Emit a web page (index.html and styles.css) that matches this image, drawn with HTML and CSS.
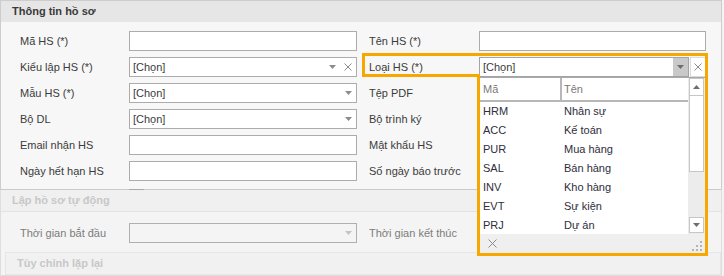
FILE: index.html
```html
<!doctype html>
<html lang="vi">
<head>
<meta charset="utf-8">
<meta name="viewport" content="width=device-width, initial-scale=1">
<title>Thông tin hồ sơ</title>
<link rel="stylesheet" href="styles.css">
</head>
<body>

	<div class="panel">

		<div class="panel-head">Thông tin hồ sơ</div>

		<div class="form">

			<label>Mã HS (*)</label>
			<div class="edit"></div>
			<label class="right">Tên HS (*)</label>
			<div class="edit"></div>

			<label>Kiểu lập HS (*)</label>
			<div class="edit combo">
				<span class="value">[Chọn]</span>
				<i class="ico"><svg width="7" height="4"><path d="M0 0H7L3.5 4Z" fill="#8c8c8c"/></svg></i>
				<i class="ico"><svg width="8" height="8"><path d="M0.5 0.5L7.5 7.5M7.5 0.5L0.5 7.5" stroke="#8c8c8c"/></svg></i>
			</div>
			<label class="right">Loại HS (*)</label>
			<div class="lookup">
				<div class="edit combo focused">
					<span class="value">[Chọn]</span>
					<i class="drop-btn"><svg width="7" height="4"><path d="M0 0H7L3.5 4Z" fill="#6e6e6e"/></svg></i>
				</div>
				<div class="clear-btn"><svg width="8" height="8"><path d="M0.5 0.5L7.5 7.5M7.5 0.5L0.5 7.5" stroke="#8c8c8c"/></svg></div>

				<div class="popup">
					<div class="popup-body">
						<div class="grid">
							<div class="grid-head"><span class="c1">Mã</span><span class="c2">Tên</span></div>
							<div class="grid-row"><span class="c1">HRM</span><span class="c2">Nhân sự</span></div>
							<div class="grid-row"><span class="c1">ACC</span><span class="c2">Kế toán</span></div>
							<div class="grid-row"><span class="c1">PUR</span><span class="c2">Mua hàng</span></div>
							<div class="grid-row"><span class="c1">SAL</span><span class="c2">Bán hàng</span></div>
							<div class="grid-row"><span class="c1">INV</span><span class="c2">Kho hàng</span></div>
							<div class="grid-row"><span class="c1">EVT</span><span class="c2">Sự kiện</span></div>
							<div class="grid-row"><span class="c1">PRJ</span><span class="c2">Dự án</span></div>
						</div>
						<div class="vscroll">
							<div class="sb-btn up"><svg width="7" height="4"><path d="M0 4H7L3.5 0Z" fill="#6e6e6e"/></svg></div>
							<div class="sb-thumb"></div>
							<div class="sb-track"></div>
							<div class="sb-btn down"><svg width="7" height="4"><path d="M0 0H7L3.5 4Z" fill="#6e6e6e"/></svg></div>
						</div>
					</div>
					<div class="popup-foot">
						<svg class="foot-close" width="9" height="9"><path d="M0.5 0.5L8.5 8.5M8.5 0.5L0.5 8.5" stroke="#8a8a8a"/></svg>
						<svg class="grip" width="12" height="10">
							<rect x="9" y="0" width="2" height="2" fill="#b4b4b4"/>
							<rect x="5" y="4" width="2" height="2" fill="#b4b4b4"/>
							<rect x="9" y="4" width="2" height="2" fill="#b4b4b4"/>
							<rect x="1" y="8" width="2" height="2" fill="#b4b4b4"/>
							<rect x="5" y="8" width="2" height="2" fill="#b4b4b4"/>
							<rect x="9" y="8" width="2" height="2" fill="#b4b4b4"/>
						</svg>
					</div>
				</div>
			</div>

			<label>Mẫu HS (*)</label>
			<div class="edit combo">
				<span class="value">[Chọn]</span>
				<i class="ico"><svg width="7" height="4"><path d="M0 0H7L3.5 4Z" fill="#8c8c8c"/></svg></i>
			</div>
			<label class="right">Tệp PDF</label>
			<div></div>

			<label>Bộ DL</label>
			<div class="edit combo">
				<span class="value">[Chọn]</span>
				<i class="ico"><svg width="7" height="4"><path d="M0 0H7L3.5 4Z" fill="#8c8c8c"/></svg></i>
			</div>
			<label class="right">Bộ trình ký</label>
			<div></div>

			<label>Email nhận HS</label>
			<div class="edit"></div>
			<label class="right">Mật khẩu HS</label>
			<div></div>

			<label>Ngày hết hạn HS</label>
			<div class="edit"></div>
			<label class="right">Số ngày báo trước</label>
			<div></div>

		</div>

	</div>

	<div class="panel sub">

		<i class="stub"></i>

		<div class="panel-head">Lập hồ sơ tự động</div>

		<div class="form single">
			<label>Thời gian bắt đầu</label>
			<div class="edit combo disabled">
				<span class="value"></span>
				<i class="ico"><svg width="7" height="4"><path d="M0 0H7L3.5 4Z" fill="#c4c4c4"/></svg></i>
			</div>
			<label class="right">Thời gian kết thúc</label>
			<div></div>
		</div>

		<div class="group">
			<div class="group-head">Tùy chỉnh lặp lại</div>
		</div>

	</div>

	<svg class="focus-ring" width="724" height="276">
		<path d="M363.5 54.5H706.5V254.5H478.5V75.5H363.5Z" fill="none" stroke="#f7a800" stroke-width="3"/>
	</svg>

</body>
</html>
```

FILE: styles.css
```css
	body { background: #f3f3f3; color: #3b3b3b; font: 11px "Liberation Sans", Arial, sans-serif; height: 276px; margin: 0; overflow: hidden; position: relative; }

	.panel { background: #f7f7f7; border: 1px solid #cdcdcd; border-bottom-color: #cacaca; width: 722px; box-sizing: border-box; }
	.panel-head { background: #e6e6e6; color: #3a3a3a; font-weight: bold; height: 21px; line-height: 21px; padding-left: 11px; }

	.form { display: grid; grid-template-columns: 109px 228px 122px 227px; grid-auto-rows: 20px; row-gap: 6px; padding: 9px 0 8px 19px; }
	.form label { align-self: center; white-space: nowrap; }
	.form label.right { padding-left: 12px; }

	.edit { background: #fff; border: 1px solid #acacac; box-sizing: border-box; height: 20px; }
	.combo { align-items: center; display: flex; padding-left: 3px; }
	.combo .value { flex: 1; }
	.ico { align-items: center; display: flex; height: 18px; justify-content: center; width: 16px; }

	.lookup { display: flex; position: relative; }
	.lookup .focused { border-color: #a4a4a4; padding-right: 0; width: 210px; }
	.drop-btn { align-items: center; background: #c9c9c9; display: flex; height: 18px; justify-content: center; width: 15px; }
	.clear-btn { align-items: center; background: #fff; border: 1px solid #dadada; box-sizing: border-box; display: flex; height: 20px; justify-content: center; margin-left: 1px; width: 16px; }

	.popup { background: #fff; border-left: 1px solid #a8a8a8; border-top: 1px solid #a8a8a8; box-sizing: border-box; display: flex; flex-direction: column; height: 176px; left: 0; position: absolute; top: 20px; width: 226px; z-index: 2; }
	.popup-body { display: flex; height: 156px; }
	.grid { flex: 1; overflow: hidden; }
	.grid-head { border-bottom: 2px solid #b7b7b7; color: #7a7a7a; display: flex; height: 22px; line-height: 22px; }
	.grid-head .c1 { border-right: 2px solid #b7b7b7; }
	.grid-row { color: #2e2e3a; display: flex; height: 19px; line-height: 19px; }
	.c1 { box-sizing: border-box; padding-left: 3px; width: 82px; }
	.c2 { padding-left: 2px; }

	.vscroll { background: #ececec; box-sizing: border-box; display: flex; flex-direction: column; padding: 0 1px 1px; width: 17px; }
	.sb-btn { align-items: center; background: #fff; border: 1px solid #c6c6c6; box-sizing: border-box; display: flex; justify-content: center; }
	.sb-btn.up { height: 18px; }
	.sb-btn.down { height: 16px; }
	.sb-thumb { background: #fff; border: 1px solid #c6c6c6; border-top: none; box-sizing: border-box; height: 76px; }
	.sb-track { flex: 1; }

	.popup-foot { align-items: center; background: #efefef; display: flex; flex: 1; justify-content: space-between; padding: 0 2px 0 8px; }
	.grip { margin-top: 4px; }

	.sub { background: #f4f4f4; border-color: #dedede; border-top: none; position: relative; }
	.sub .panel-head { background: #f0f0f0; border-bottom: 1px solid #e3e3e3; color: #c8c8c8; }
	.form.single { padding: 11px 0 9px 19px; }
	.sub label { color: #7c7c7c; }
	.edit.disabled { background: #f4f4f4; border-color: #b0b0b0; }

	.group { border: 1px solid #e6e6e6; margin: 0 0 0 4px; }
	.group-head { background: #f1f1f1; color: #c8c8c8; font-weight: bold; height: 21px; line-height: 21px; padding-left: 11px; }

	.stub { background: #a9a9a9; height: 1px; left: 128px; position: absolute; top: -1px; width: 15px; }

	.focus-ring { left: 0; pointer-events: none; position: absolute; top: 0; z-index: 5; }
```
